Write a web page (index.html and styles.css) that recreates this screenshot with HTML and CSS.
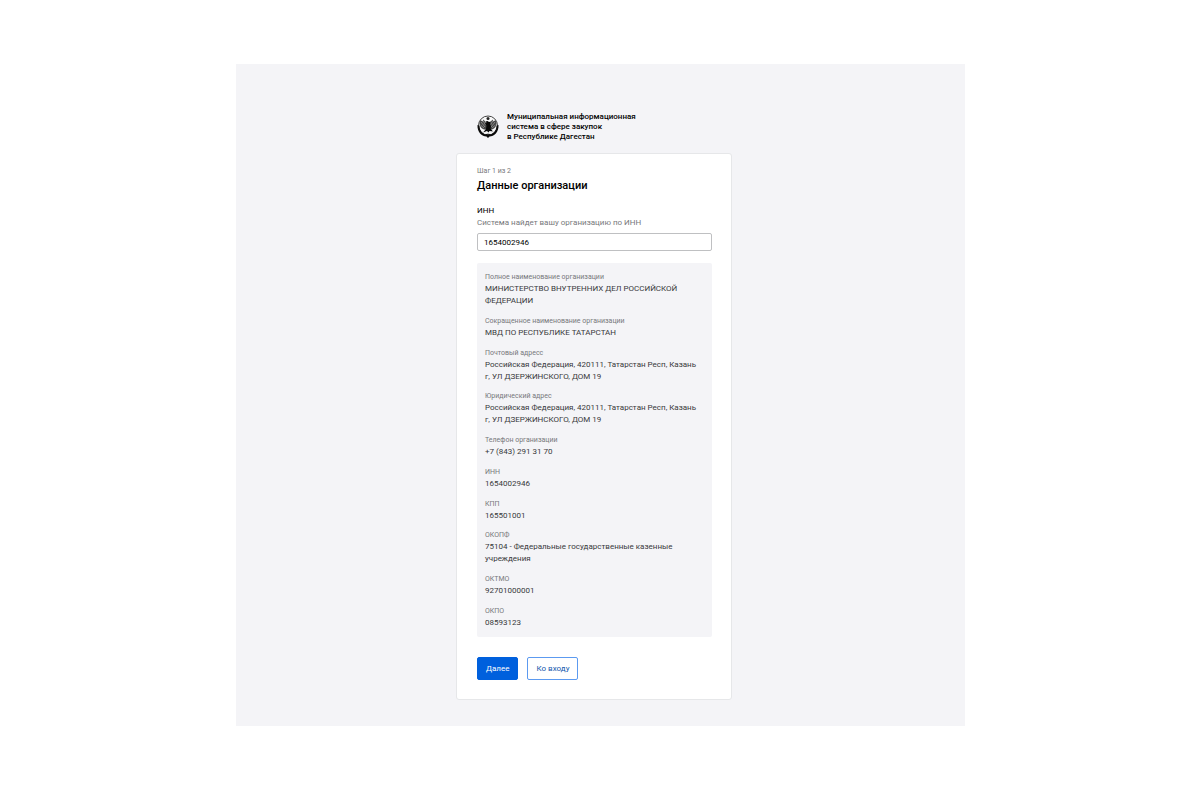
FILE: index.html
```html
<!DOCTYPE html>
<html lang="ru">
<head>
<meta charset="utf-8">
<meta name="viewport" content="width=device-width, initial-scale=1">
<title>Данные организации</title>
<link rel="stylesheet" href="styles.css">
</head>
<body>
<main class="panel">
  <div class="column">
    <header class="brand">
      <svg class="brand-logo" viewBox="0 1 44 46" aria-hidden="true">
        <circle cx="22" cy="21" r="19" fill="#f9f9fa" stroke="#444" stroke-width="2"/>
        <path d="M1 20C0 34 10 43 19 43l3 3 3-3C34 43 44 34 43 20l-4 1c0 9-5 16-12 18l-5-2-5 2C10 37 5 30 5 21z" fill="#0b0b0b"/>
        <path d="M7 10l-2 6c0 6 3 11 9 13l6 0 0-9-3-6-4-5-2 4zM37 10l2 6c0 6-3 11-9 13l-6 0 0-9 3-6 4-5 2 4z" fill="#444"/>
        <path d="M8 14l8 10M12 11l5 9M36 14l-8 10M32 11l-5 9M7 20l7 6M37 20l-7 6" stroke="#ccc" stroke-width="1"/>
        <path d="M17 13l4-1 3 2 4-1-2 4 2 6-1 4 5 6-7-1-2 3-3-3-8 3 6-7 1-7-3-4 3-1z" fill="#080808"/>
        <circle cx="22" cy="7" r="3" fill="#222"/>
        <path d="M9 32l6 3 7 3 7-3 6-3" fill="none" stroke="#ddd" stroke-width="1"/>
      </svg>
      <p class="brand-name">Муниципальная информационная<br>система в сфере закупок<br>в Республике Дагестан</p>
    </header>
    <form class="card">
      <p class="step">Шаг 1 из 2</p>
      <h1 class="title">Данные организации</h1>
      <label class="field-label" for="inn">ИНН</label>
      <p class="field-hint" id="inn-hint">Система найдет вашу организацию по ИНН</p>
      <input class="field-input" id="inn" type="text" value="1654002946" aria-describedby="inn-hint">
      <dl class="details">
        <div class="item"><dt>Полное наименование организации</dt><dd>МИНИСТЕРСТВО ВНУТРЕННИХ ДЕЛ РОССИЙСКОЙ ФЕДЕРАЦИИ</dd></div>
        <div class="item"><dt>Сокращенное наименование организации</dt><dd>МВД ПО РЕСПУБЛИКЕ ТАТАРСТАН</dd></div>
        <div class="item"><dt>Почтовый адресс</dt><dd>Российская Федерация, 420111, Татарстан Респ, Казань г, УЛ ДЗЕРЖИНСКОГО, ДОМ 19</dd></div>
        <div class="item"><dt>Юридический адрес</dt><dd>Российская Федерация, 420111, Татарстан Респ, Казань г, УЛ ДЗЕРЖИНСКОГО, ДОМ 19</dd></div>
        <div class="item"><dt>Телефон организации</dt><dd>+7 (843) 291 31 70</dd></div>
        <div class="item"><dt>ИНН</dt><dd>1654002946</dd></div>
        <div class="item"><dt>КПП</dt><dd>165501001</dd></div>
        <div class="item"><dt>ОКОПФ</dt><dd>75104 - Федеральные государственные казенные учреждения</dd></div>
        <div class="item"><dt>ОКТМО</dt><dd>92701000001</dd></div>
        <div class="item"><dt>ОКПО</dt><dd>08593123</dd></div>
      </dl>
      <div class="actions">
        <button class="button button-primary" type="submit">Далее</button>
        <button class="button button-outline" type="button">Ко входу</button>
      </div>
    </form>
  </div>
</main>
</body>
</html>
```

FILE: styles.css
```css
* {
  box-sizing: border-box;
}

body {
  margin: 0;
  padding: 64px 235px 63px 236px;
  background: #fff;
  color: #000;
  font: 8px/12px Roboto, "Liberation Sans", sans-serif;
}

p, h1, dl, dd {
  margin: 0;
}

.panel {
  display: flex;
  justify-content: center;
  padding: 48px 13px 26px 0;
  background: #f4f4f7;
}

.column {
  width: 100%;
  max-width: 276px;
}

.brand {
  display: flex;
  align-items: center;
  gap: 8px;
  padding: 0 20px 11px 21px;
}

.brand-logo {
  flex: none;
  width: 22px;
  height: 24px;
}

.brand-name {
  font-weight: 500;
  line-height: 10px;
}

.card {
  display: flex;
  flex-direction: column;
  padding: 12px 19px 19px 20px;
  background: #fff;
  border: 1px solid #e6e7e9;
  border-radius: 3px;
}

.step {
  color: #77787b;
  font-size: 7px;
  line-height: 10px;
}

.title {
  margin-top: 2px;
  font-size: 11px;
  font-weight: 500;
  line-height: 16px;
}

.field-label {
  margin-top: 11px;
}

.field-hint {
  color: #77787b;
}

.field-input {
  height: 18px;
  margin-top: 4px;
  padding: 0 6px;
  border: 1px solid #bfc0c2;
  border-radius: 2px;
  background: #fff;
  color: #000;
  font: inherit;
}

.details {
  display: flex;
  flex-direction: column;
  justify-content: space-between;
  gap: 8px;
  min-height: 374px;
  margin-top: 12px;
  padding: 9px 10px 8px 8px;
  border-radius: 2px;
  background: #f4f4f7;
  color: #38393b;
}

.item dt {
  margin-bottom: 1px;
  color: #77787b;
  font-size: 7px;
  line-height: 10px;
}

.actions {
  display: flex;
  gap: 9px;
  margin-top: 20px;
}

.button {
  padding: 4px 8px;
  border: 1px solid #0060dd;
  border-radius: 2px;
  font: inherit;
  line-height: 13px;
}

.button-primary {
  background: #0060dd;
  color: #fff;
}

.button-outline {
  border-color: #5c9af0;
  background: #fff;
  color: #1457ad;
}
```
